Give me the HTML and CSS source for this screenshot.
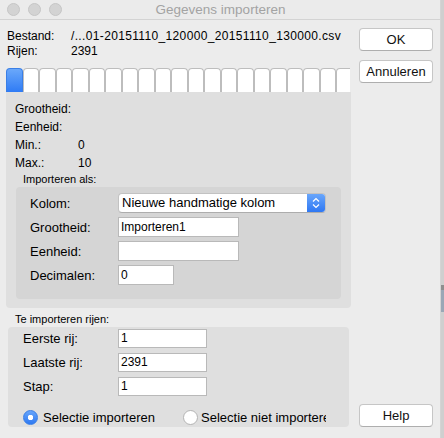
FILE: index.html
```html
<!DOCTYPE html>
<html>
<head>
<meta charset="utf-8">
<link rel="stylesheet" href="styles.css">
</head>
<body>
<div class="window">
  <div class="titlebar">
    <div class="lights"><span class="light"></span><span class="light"></span><span class="light"></span></div>
    <div class="title">Gegevens importeren</div>
    <div></div>
  </div>
  <div class="content">
    <div class="left">
      <div class="info">
        <span>Bestand:</span><span class="file">/...01-20151110_120000_20151110_130000.csv</span>
        <span>Rijen:</span><span>2391</span>
      </div>
      <div class="tabs">
        <span class="tab active"></span><span class="tab"></span><span class="tab"></span><span class="tab"></span><span class="tab"></span><span class="tab"></span><span class="tab"></span><span class="tab"></span><span class="tab"></span><span class="tab"></span><span class="tab"></span><span class="tab"></span><span class="tab"></span><span class="tab"></span><span class="tab"></span><span class="tab"></span><span class="tab"></span><span class="tab"></span><span class="tab"></span><span class="tab"></span><span class="tab"></span>
      </div>
      <div class="panel">
        <div class="stats">
          <span>Grootheid:</span><span></span>
          <span>Eenheid:</span><span></span>
          <span>Min.:</span><span>0</span>
          <span>Max.:</span><span>10</span>
        </div>
        <div class="small-label indent">Importeren als:</div>
        <div class="subpanel">
          <div class="frow"><span class="flabel">Kolom:</span>
            <div class="select"><span class="select-text">Nieuwe handmatige kolom</span>
              <span class="stepper"><svg width="10" height="14" viewBox="0 0 10 14"><path d="M2 5.5 L5 2.5 L8 5.5 M2 8.5 L5 11.5 L8 8.5" fill="none" stroke="#fff" stroke-width="1.2"/></svg></span>
            </div>
          </div>
          <div class="frow"><span class="flabel">Grootheid:</span><div class="input w121">Importeren1</div></div>
          <div class="frow"><span class="flabel">Eenheid:</span><div class="input w121"></div></div>
          <div class="frow"><span class="flabel">Decimalen:</span><div class="input w56">0</div></div>
        </div>
      </div>
      <div class="small-label rows-label">Te importeren rijen:</div>
      <div class="panel2">
        <div class="brow"><span class="blabel">Eerste rij:</span><div class="input w89">1</div></div>
        <div class="brow"><span class="blabel">Laatste rij:</span><div class="input w89">2391</div></div>
        <div class="brow"><span class="blabel">Stap:</span><div class="input w89">1</div></div>
        <div class="radios">
          <div class="radio-item first"><span class="radio on"></span><span>Selectie importeren</span></div>
          <div class="radio-item second"><span class="radio"></span><span class="clip">Selectie niet importeren</span></div>
        </div>
      </div>
    </div>
    <div class="right">
      <div class="btn ok">OK</div>
      <div class="btn cancel">Annuleren</div>
      <div class="btn help">Help</div>
    </div>
  </div>
</div>
<div class="edge"><div class="thumb"></div></div>
</body>
</html>
```

FILE: styles.css
```css
html, body {
  margin: 0;
  padding: 0;
}
body {
  width: 444px;
  height: 438px;
  overflow: hidden;
  display: flex;
  background: #ececec;
  font-family: "Liberation Sans", Arial, sans-serif;
  font-size: 12px;
  color: #000;
}
.window {
  width: 440px;
  height: 438px;
  border-right: 1px solid #d4d4d4;
  display: flex;
  flex-direction: column;
  background: #ececec;
}
.titlebar {
  height: 19px;
  border-bottom: 1px solid #d3d3d3;
  display: grid;
  grid-template-columns: 1fr auto 1fr;
  align-items: center;
  background: #ebebeb;
}
.lights {
  display: flex;
  gap: 8px;
  padding-left: 7px;
}
.light {
  width: 11px;
  height: 11px;
  border-radius: 50%;
  background: #d3d3d3;
  border: 0.5px solid #c6c6c6;
}
.title {
  font-size: 13.5px;
  color: #a3a3a3;
  padding-left: 1px;
}
.content {
  flex: 1;
  display: flex;
}
.left {
  width: 345px;
  padding-left: 6px;
}
.info {
  display: grid;
  grid-template-columns: 64px auto;
  line-height: 15px;
  padding-top: 9px;
  padding-left: 1px;
  white-space: nowrap;
}
.file {
  letter-spacing: 0.35px;
}
.tabs {
  margin-top: 9px;
  height: 24px;
  width: 344px;
  display: flex;
  overflow: hidden;
}
.tab {
  flex: 0 0 16.5px;
  box-sizing: border-box;
  height: 24px;
  background: #fff;
  border: 1px solid #bdbdbd;
  border-bottom: none;
  border-radius: 4px 4px 0 0;
}
.tab.active {
  background: linear-gradient(#6aa8fa, #2f7bf5);
  border-color: #3a7fe6;
}
.panel {
  width: 345px;
  box-sizing: border-box;
  height: 216px;
  background: #dfdfdf;
  border-radius: 0 0 4px 4px;
  padding: 8px 10px 9px 9px;
}
.stats {
  display: grid;
  grid-template-columns: 63px auto;
  grid-auto-rows: 18px;
  align-items: center;
}
.small-label {
  font-size: 11px;
  line-height: 15px;
}
.indent {
  padding-left: 8px;
}
.subpanel {
  margin-left: 1px;
  width: 325px;
  height: 112px;
  box-sizing: border-box;
  background: #d5d5d5;
  border-radius: 4px;
  padding: 6px 0 14px 14px;
  display: flex;
  flex-direction: column;
  gap: 4px;
}
.frow {
  display: flex;
  align-items: center;
  height: 20px;
}
.flabel {
  width: 88px;
  font-size: 13px;
}
.input {
  box-sizing: border-box;
  height: 20px;
  background: #fff;
  border: 1px solid #b9b9b9;
  padding-left: 2px;
  font-size: 12px;
  line-height: 18px;
  white-space: nowrap;
}
.w121 { width: 121px; }
.w56 { width: 56px; }
.w89 { width: 89px; }
.select {
  box-sizing: border-box;
  width: 208px;
  height: 20px;
  margin-top: -1px;
  display: flex;
  align-items: stretch;
  background: #fff;
  border: 1px solid #c2c2c2;
  border-bottom-color: #adadad;
  border-radius: 4px;
  overflow: hidden;
}
.select-text {
  flex: 1;
  font-size: 13px;
  line-height: 18px;
  padding-left: 3px;
  white-space: nowrap;
}
.stepper {
  width: 18px;
  display: flex;
  align-items: center;
  justify-content: center;
  background: linear-gradient(#69a6fb, #2f78f3);
}
.rows-label {
  padding-left: 9px;
  margin-top: 4px;
}
.panel2 {
  margin-left: 2px;
  width: 341px;
  height: 100px;
  box-sizing: border-box;
  background: #dfdfdf;
  border-radius: 4px;
  padding: 2px 0 2px 15px;
  display: flex;
  flex-direction: column;
  gap: 5px;
}
.brow {
  display: flex;
  align-items: center;
  height: 19px;
}
.brow .input {
  height: 19px;
  line-height: 17px;
}
.blabel {
  width: 95px;
  font-size: 13px;
}
.radios {
  margin-top: 8px;
  display: flex;
  align-items: center;
  height: 16px;
  font-size: 13px;
}
.radio-item {
  display: flex;
  align-items: center;
  gap: 5px;
  white-space: nowrap;
}
.radio-item.first {
  width: 160px;
}
.radio-item.second {
  width: 143px;
  overflow: hidden;
  gap: 3px;
}
.radio {
  flex: 0 0 auto;
  box-sizing: border-box;
  width: 15px;
  height: 15px;
  border-radius: 50%;
  background: #fff;
  border: 1px solid #b3b3b3;
}
.radio.on {
  background: radial-gradient(circle, #fff 0 2.5px, transparent 3px), linear-gradient(#67a5fb, #2e79f2);
  border-color: #3a7fe6;
}
.clip {
  overflow: hidden;
}
.right {
  width: 74px;
  margin-left: 8px;
  display: flex;
  flex-direction: column;
  padding-top: 8px;
  padding-bottom: 11px;
}
.btn {
  box-sizing: border-box;
  height: 23px;
  background: #fff;
  border: 1px solid #c6c6c6;
  border-bottom-color: #aeaeae;
  border-radius: 4px;
  font-size: 13px;
  line-height: 21px;
  text-align: center;
  color: #111;
}
.cancel {
  margin-top: 9px;
}
.help {
  margin-top: auto;
}
.edge {
  width: 3px;
  height: 438px;
  background: #cfcfcf;
}
.thumb {
  margin-top: 285px;
  height: 27px;
  background: linear-gradient(#8e8e8e 0 5px, #9aa7b6 5px);
}
```
